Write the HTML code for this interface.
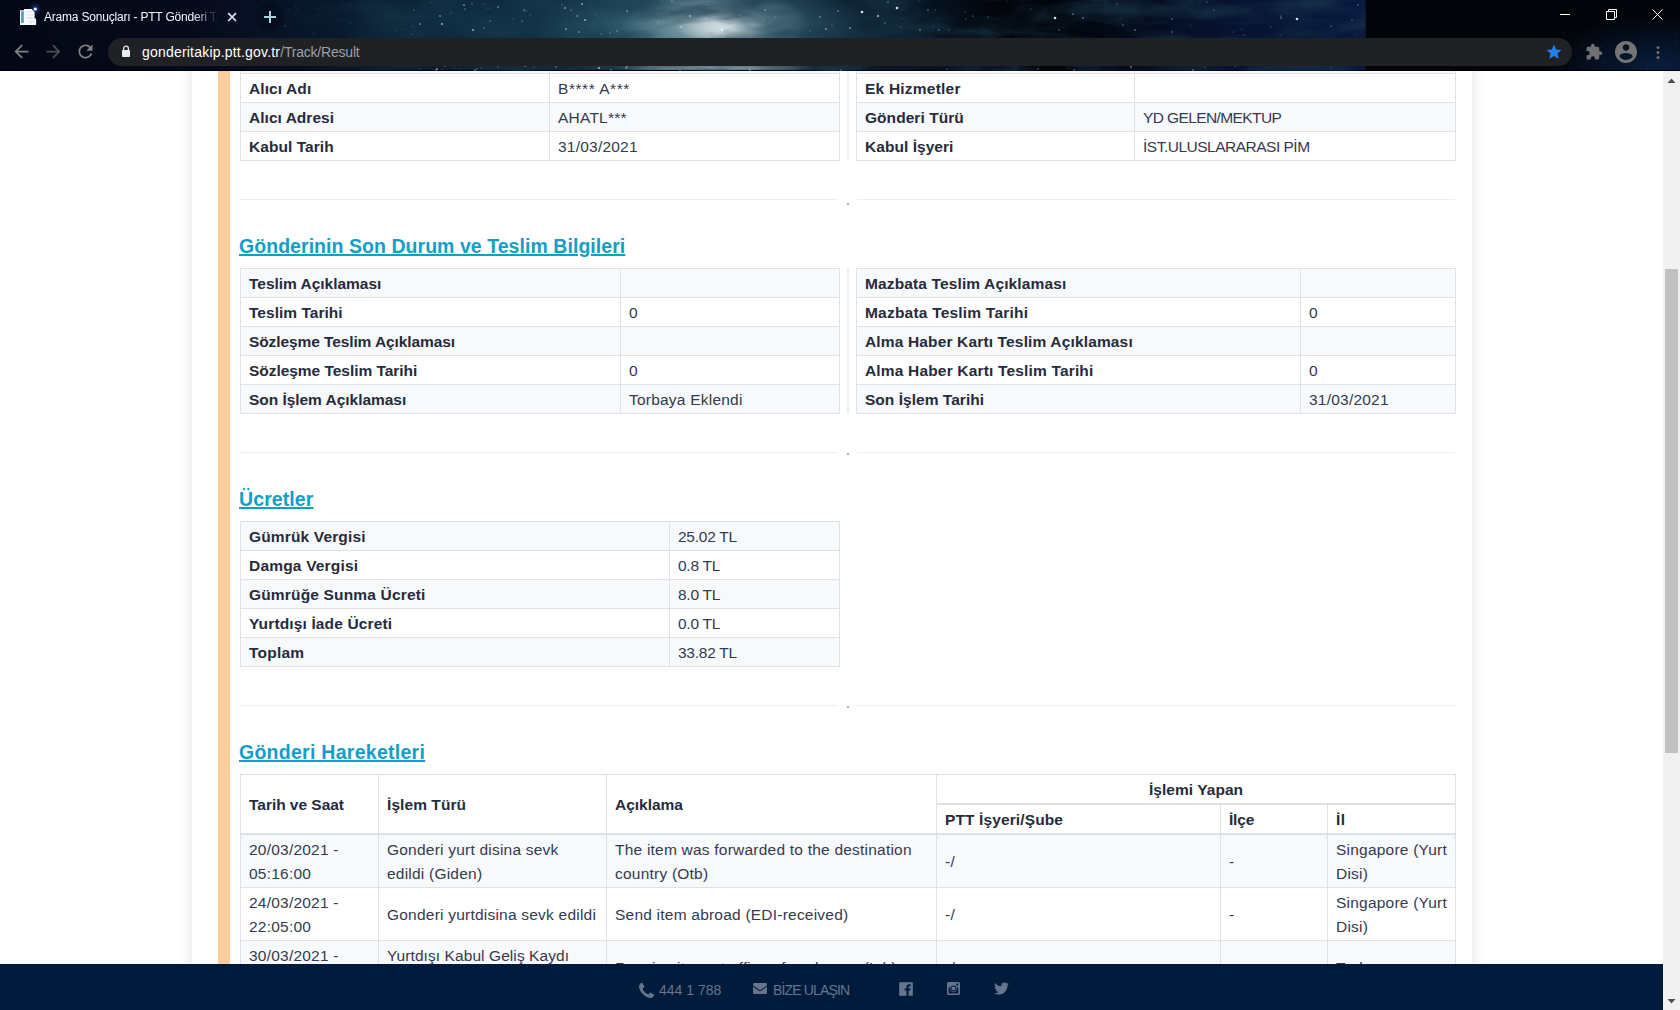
<!DOCTYPE html>
<html lang="tr">
<head>
<meta charset="utf-8">
<title>Arama Sonuçları - PTT Gönderi Takip</title>
<style>
*{box-sizing:border-box}
html,body{margin:0;padding:0}
body{width:1680px;height:1010px;overflow:hidden;position:relative;background:#fff;font-family:"Liberation Sans",sans-serif;font-size:15.5px;line-height:24px;color:#343a4f}
.abs{position:absolute}
/* ---------- browser chrome ---------- */
#chrome{position:absolute;left:0;top:0;width:1680px;height:71px;overflow:hidden;background:#03060f}
#chrome .bg{position:absolute;left:0;top:0;width:1680px;height:71px;background:
 radial-gradient(ellipse 100px 5px at 715px 68px,rgba(190,212,218,.85),rgba(150,180,190,0) 100%),
 radial-gradient(ellipse 45px 16px at 722px 28px,rgba(215,226,230,.9),rgba(200,215,220,0) 100%),
 radial-gradient(ellipse 95px 36px at 716px 25px,rgba(176,194,200,.98),rgba(140,166,176,.6) 45%,rgba(150,172,180,0) 100%),
 radial-gradient(ellipse 170px 60px at 705px 30px,rgba(70,118,134,.95),rgba(70,118,134,0) 100%),
 radial-gradient(ellipse 330px 100px at 670px 30px,rgba(24,70,92,.95),rgba(24,70,92,0) 100%),
 radial-gradient(ellipse 260px 80px at 440px 20px,rgba(12,40,62,.9),rgba(12,40,62,0) 100%),
 linear-gradient(90deg,rgba(8,24,64,0) 1060px,rgba(7,21,56,.85) 1230px,rgba(9,25,64,1) 1365px,rgba(0,0,0,0) 1366px),
 radial-gradient(ellipse 120px 50px at 1660px 66px,rgba(12,40,84,.7),rgba(12,40,84,0) 100%),
 linear-gradient(90deg,#040816 0,#050a1c 300px,#040a18 900px,#02050c 1000px,#020409 1366px,#020409 1680px)}
#chrome .bg2{position:absolute;left:0;top:70px;width:1680px;height:1px;background:#000}
#omni{position:absolute;left:108px;top:38px;width:1464px;height:28px;border-radius:14px;background:#202124}
#tabtitle{position:absolute;left:44px;top:7px;font-size:12px;line-height:20px;color:#eef9ff;white-space:nowrap;width:176px;overflow:hidden;letter-spacing:-0.2px;-webkit-mask-image:linear-gradient(90deg,#000 150px,transparent 174px);mask-image:linear-gradient(90deg,#000 150px,transparent 174px)}
#url{position:absolute;left:142px;top:42px;font-size:14px;line-height:20px;color:#fff;white-space:nowrap;letter-spacing:0.2px}
#url span{color:#9aa0a6;letter-spacing:-0.2px}
/* ---------- page ---------- */
#page{position:absolute;left:0;top:71px;width:1663px;height:893px;overflow:hidden;background:#fff}
#cont{position:absolute;left:192px;top:-40px;width:1280px;height:1100px;background:#fff;box-shadow:0 0 14px rgba(0,0,0,.13)}
#bar{position:absolute;left:218px;top:0;width:12px;height:900px;background:#f8cc9d}
table{border-collapse:collapse;table-layout:fixed;position:absolute;margin:0}
td,th{border:1px solid #dee2e6;padding:3px 8px 1px 8px;height:29px;text-align:left;vertical-align:middle;font-weight:400;overflow:hidden;letter-spacing:0.22px}
th{font-weight:700;color:#262b3d;letter-spacing:0.05px}
#t4 thead th{border-bottom-width:2px}
tr.s td,tr.s th{background:#f8f9fa}
h3{position:absolute;margin:0;font-size:19.5px;line-height:28px;font-weight:700;color:#129ec8;white-space:nowrap;letter-spacing:0.05px;text-decoration:underline;text-decoration-thickness:2px;text-underline-offset:1px}
.hr{position:absolute;height:1px;background:#eceef0}
.vd{position:absolute;width:2px;left:847px;background:#eceef0}
.dot{position:absolute;left:847px;width:2px;height:2px;background:#a4aacb}
/* ---------- footer ---------- */
#footer{position:absolute;left:0;top:964px;width:1663px;height:46px;background:#001b3b;color:#66758d;font-size:14px;line-height:20px}
#footer span{position:absolute;top:16px;white-space:nowrap}
/* ---------- scrollbar ---------- */
#sb{position:absolute;left:1663px;top:71px;width:17px;height:939px;background:#f1f1f1}
#sb .thumb{position:absolute;left:2px;top:198px;width:13px;height:484px;background:#c1c1c1}
#sb svg{position:absolute;left:4px}
</style>
</head>
<body>

<!-- PAGE -->
<div id="page">
  <div id="cont"></div>
  <div id="bar"></div>

  <!-- section 1 (cut by viewport) -->
  <table style="left:240px;top:-27px;width:600px">
    <colgroup><col style="width:309px"><col></colgroup>
    <tr class="s"><th>Gönderen Adı</th><td>S*** P***</td></tr>
    <tr><th style="letter-spacing:0.1px">Alıcı Adı</th><td style="letter-spacing:0.55px">B**** A***</td></tr>
    <tr class="s"><th style="letter-spacing:0.03px">Alıcı Adresi</th><td>AHATL***</td></tr>
    <tr><th style="letter-spacing:0.05px">Kabul Tarih</th><td>31/03/2021</td></tr>
  </table>
  <table style="left:856px;top:-27px;width:600px">
    <colgroup><col style="width:278px"><col></colgroup>
    <tr class="s"><th>Ağırlık</th><td></td></tr>
    <tr><th style="letter-spacing:0.22px">Ek Hizmetler</th><td></td></tr>
    <tr class="s"><th style="letter-spacing:0.05px">Gönderi Türü</th><td style="letter-spacing:-0.6px">YD GELEN/MEKTUP</td></tr>
    <tr><th style="letter-spacing:0.05px">Kabul İşyeri</th><td style="letter-spacing:-0.5px">İST.ULUSLARARASI PİM</td></tr>
  </table>
  <div class="vd" style="top:0;height:90px"></div>
  <div class="hr" style="left:240px;top:128px;width:598px"></div>
  <div class="hr" style="left:857px;top:128px;width:598px"></div>
  <div class="dot" style="top:132px"></div>

  <!-- section 2 -->
  <h3 style="left:239px;top:161px">Gönderinin Son Durum ve Teslim Bilgileri</h3>
  <table style="left:240px;top:197px;width:600px">
    <colgroup><col style="width:380px"><col></colgroup>
    <tr class="s"><th style="letter-spacing:-0.02px">Teslim Açıklaması</th><td></td></tr>
    <tr><th style="letter-spacing:0.03px">Teslim Tarihi</th><td>0</td></tr>
    <tr class="s"><th style="letter-spacing:-0.1px">Sözleşme Teslim Açıklaması</th><td></td></tr>
    <tr><th style="letter-spacing:-0.04px">Sözleşme Teslim Tarihi</th><td>0</td></tr>
    <tr class="s"><th style="letter-spacing:-0.04px">Son İşlem Açıklaması</th><td>Torbaya Eklendi</td></tr>
  </table>
  <table style="left:856px;top:197px;width:600px">
    <colgroup><col style="width:444px"><col></colgroup>
    <tr class="s"><th style="letter-spacing:0.13px">Mazbata Teslim Açıklaması</th><td></td></tr>
    <tr><th style="letter-spacing:0.21px">Mazbata Teslim Tarihi</th><td>0</td></tr>
    <tr class="s"><th style="letter-spacing:0.15px">Alma Haber Kartı Teslim Açıklaması</th><td></td></tr>
    <tr><th style="letter-spacing:0.17px">Alma Haber Kartı Teslim Tarihi</th><td>0</td></tr>
    <tr class="s"><th style="letter-spacing:0.03px">Son İşlem Tarihi</th><td>31/03/2021</td></tr>
  </table>
  <div class="vd" style="top:197px;height:146px"></div>
  <div class="hr" style="left:240px;top:381px;width:598px"></div>
  <div class="hr" style="left:857px;top:381px;width:598px"></div>
  <div class="dot" style="top:382px"></div>

  <!-- section 3 -->
  <h3 style="left:239px;top:414px;letter-spacing:0.1px">Ücretler</h3>
  <table style="left:240px;top:450px;width:600px">
    <colgroup><col style="width:429px"><col></colgroup>
    <tr class="s"><th style="letter-spacing:0.15px">Gümrük Vergisi</th><td style="letter-spacing:-0.25px">25.02 TL</td></tr>
    <tr><th style="letter-spacing:0.19px">Damga Vergisi</th><td style="letter-spacing:-0.25px">0.8 TL</td></tr>
    <tr class="s"><th style="letter-spacing:0.17px">Gümrüğe Sunma Ücreti</th><td style="letter-spacing:-0.25px">8.0 TL</td></tr>
    <tr><th style="letter-spacing:0.14px">Yurtdışı İade Ücreti</th><td style="letter-spacing:-0.25px">0.0 TL</td></tr>
    <tr class="s"><th style="letter-spacing:0.22px">Toplam</th><td style="letter-spacing:-0.25px">33.82 TL</td></tr>
  </table>
  <div class="hr" style="left:240px;top:634px;width:598px"></div>
  <div class="hr" style="left:857px;top:634px;width:598px"></div>
  <div class="dot" style="top:635px"></div>

  <!-- section 4 -->
  <h3 style="left:239px;top:667px;letter-spacing:0.27px">Gönderi Hareketleri</h3>
  <table id="t4" style="left:240px;top:703px;width:1216px">
    <colgroup><col style="width:138px"><col style="width:228px"><col style="width:330px"><col style="width:284px"><col style="width:107px"><col></colgroup>
    <thead>
    <tr><th rowspan="2" style="letter-spacing:-0.03px">Tarih ve Saat</th><th rowspan="2" style="letter-spacing:0.07px">İşlem Türü</th><th rowspan="2" style="letter-spacing:-0.02px">Açıklama</th><th colspan="3" style="text-align:center;border-bottom-width:2px">İşlemi Yapan</th></tr>
    <tr class="h2"><th style="letter-spacing:0.12px">PTT İşyeri/Şube</th><th style="letter-spacing:-0.2px">İlçe</th><th style="letter-spacing:0.55px">İl</th></tr>
    </thead>
    <tbody>
    <tr class="s"><td>20/03/2021 - 05:16:00</td><td>Gonderi yurt disina sevk edildi (Giden)</td><td>The item was forwarded to the destination country (Otb)</td><td>-/</td><td>-</td><td>Singapore (Yurt Disi)</td></tr>
    <tr><td>24/03/2021 - 22:05:00</td><td>Gonderi yurtdisina sevk edildi</td><td>Send item abroad (EDI-received)</td><td>-/</td><td>-</td><td>Singapore (Yurt Disi)</td></tr>
    <tr class="s"><td>30/03/2021 - 09:12:00</td><td style="letter-spacing:0.08px">Yurtdışı Kabul Geliş Kaydı Yapıldı</td><td>Receive item at office of exchange (Inb)</td><td>-/</td><td>-</td><td>Turkey</td></tr>
    </tbody>
  </table>
</div>

<!-- FOOTER -->
<div id="footer">
  <svg class="abs" style="left:639px;top:19px" width="15" height="15" viewBox="0 0 1408 1408"><path fill="#66758d" d="M1408 1112q0 27-10 70.500t-21 68.500q-21 50-122 106-94 51-186 51-27 0-53-3.500t-57.500-12.500-47-14.500-55.500-20.500-49-18q-98-35-175-83-127-79-264-216t-216-264q-48-77-83-175-3-9-18-49t-20.500-55.500-14.500-47-12.500-57.500-3.500-53q0-92 51-186 56-101 106-122 25-11 68.500-21t70.500-10q14 0 21 3 18 6 53 76 11 19 30 54t35 63.500 31 53.500q3 4 17.500 25t21.500 35.500 7 28.500q0 20-28.500 50t-62 55-62 53-28.500 46q0 9 5 22.500t8.500 20.500 14 24 11.500 19q76 137 174 235t235 174q2 1 19 11.500t24 14 20.500 8.500 22.500 5q18 0 46-28.500t53-62 55-62 50-28.500q14 0 28.500 7t35.500 21.500 25 17.500q25 15 53.500 31t63.500 35 54 30q70 35 76 53 3 7 3 21z"/></svg>
  <span style="left:659px">444 1 788</span>
  <svg class="abs" style="left:753px;top:17px" width="14" height="14" viewBox="0 0 1792 1792"><path fill="#66758d" d="M1792 710v794q0 66-47 113t-113 47h-1472q-66 0-113-47t-47-113v-794q44 49 101 87 362 246 497 345 57 42 92.500 65.500t94.500 48 110 24.500h2q51 0 110-24.500t94.500-48 92.500-65.500q170-123 498-345 57-39 100-87zm0-294q0 79-49 151t-122 123q-376 261-468 325-10 7-42.500 30.500t-54 38-52 32.500-57.500 27-50 9h-2q-23 0-50-9t-57.500-27-52-32.500-54-38-42.500-30.500q-91-64-262-182.500t-205-142.500q-62-42-117-115.500t-55-136.500q0-78 41.500-130t118.500-52h1472q65 0 112.500 47t47.500 113z"/></svg>
  <span style="left:773px;letter-spacing:-0.85px">BİZE ULAŞIN</span>
  <svg class="abs" style="left:897.500px;top:16.500px" width="16" height="16" viewBox="0 0 1792 1792"><path fill="#66758d" d="M1579 128q35 0 60 25t25 60v1366q0 35-25 60t-60 25h-391v-595h199l30-232h-229v-148q0-56 23.500-84t91.500-28l122-1v-207q-63-9-178-9-136 0-217.500 80t-81.500 226v171h-200v232h200v595h-735q-35 0-60-25t-25-60v-1366q0-35 25-60t60-25h1366z"/></svg>
  <svg class="abs" style="left:946.500px;top:18px" width="13" height="13" viewBox="0 0 13 13"><path fill="#66758d" fill-rule="evenodd" d="M1.500 0h10A1.500 1.500 0 0 1 13 1.500v10a1.500 1.500 0 0 1-1.500 1.500h-10A1.500 1.500 0 0 1 0 11.500v-10A1.500 1.500 0 0 1 1.500 0zM9.300 1.600v1.900h1.900V1.600zM6.500 3.400a3.100 3.100 0 1 0 0 6.200 3.100 3.100 0 0 0 0-6.200zM1.600 5.400v5.500c0 .3.200.5.500.5h8.800c.3 0 .5-.2.500-.5V5.400H9.900a3.600 3.600 0 1 1-6.800 0z"/><circle cx="6.500" cy="6.500" r="2" fill="#66758d"/></svg>
  <svg class="abs" style="left:992.500px;top:16px" width="17" height="17" viewBox="0 0 1792 1792"><path fill="#66758d" d="M1684 408q-67 98-162 167 1 14 1 42 0 130-38 259.500t-115.500 248.500-184.500 210.500-258 146-323 54.500q-271 0-496-145 35 4 78 4 225 0 401-138-105-2-188-64.500t-114-159.500q33 5 61 5 43 0 85-11-112-23-185.500-111.500t-73.500-205.500v-4q68 38 146 41-66-44-105-115t-39-154q0-88 44-163 121 149 294.500 238.500t371.500 99.500q-8-38-8-74 0-134 94.500-228.500t228.500-94.500q140 0 236 102 109-21 205-78-37 115-142 178 93-10 186-50z"/></svg>
</div>

<!-- SCROLLBAR -->
<div id="sb"><div class="thumb"></div><svg style="top:6.5px" width="9" height="5" viewBox="0 0 9 5"><path d="M0.500 5L4.500 0.600 8.500 5z" fill="#505050"/></svg><svg style="top:927.500px" width="9" height="5" viewBox="0 0 9 5"><path d="M0.500 0L4.500 4.400 8.500 0z" fill="#505050"/></svg></div>

<!-- CHROME -->
<div id="chrome">
  <div class="bg"></div>
  <div class="bg2"></div>
  <svg class="abs" style="left:0;top:0" width="1680" height="71" viewBox="0 0 1680 71"><defs><filter id="nz" x="0" y="0" width="100%" height="100%"><feTurbulence type="fractalNoise" baseFrequency="0.014 0.05" numOctaves="4" seed="5"/><feColorMatrix values="0 0 0 0 0.01  0 0 0 0 0.04  0 0 0 0 0.07  1.5 0 0 0 -0.56"/></filter><linearGradient id="mg" x1="0" x2="1680" gradientUnits="userSpaceOnUse"><stop offset="0.16" stop-color="#000"/><stop offset="0.26" stop-color="#fff"/><stop offset="1" stop-color="#fff"/></linearGradient><mask id="mk" maskUnits="userSpaceOnUse" x="0" y="0" width="1680" height="71"><rect width="1680" height="71" fill="url(#mg)"/></mask></defs><g mask="url(#mk)"><rect x="260" y="0" width="1106" height="71" filter="url(#nz)"/></g><circle cx="562" cy="5" r="0.7" fill="#cfe8ee" opacity="0.39"/><circle cx="668" cy="13" r="0.4" fill="#cfe8ee" opacity="0.65"/><circle cx="419" cy="16" r="0.4" fill="#cfe8ee" opacity="0.40"/><circle cx="612" cy="30" r="0.4" fill="#cfe8ee" opacity="0.48"/><circle cx="714" cy="34" r="0.7" fill="#cfe8ee" opacity="0.59"/><circle cx="888" cy="2" r="0.8" fill="#cfe8ee" opacity="0.52"/><circle cx="472" cy="4" r="0.5" fill="#cfe8ee" opacity="0.84"/><circle cx="490" cy="21" r="0.7" fill="#cfe8ee" opacity="0.57"/><circle cx="674" cy="2" r="0.4" fill="#cfe8ee" opacity="0.47"/><circle cx="740" cy="15" r="0.5" fill="#cfe8ee" opacity="0.70"/><circle cx="627" cy="11" r="0.8" fill="#cfe8ee" opacity="0.77"/><circle cx="522" cy="21" r="0.6" fill="#cfe8ee" opacity="0.88"/><circle cx="765" cy="10" r="0.9" fill="#cfe8ee" opacity="0.42"/><circle cx="609" cy="27" r="0.4" fill="#cfe8ee" opacity="0.64"/><circle cx="420" cy="24" r="0.8" fill="#cfe8ee" opacity="0.69"/><circle cx="838" cy="11" r="0.7" fill="#cfe8ee" opacity="0.71"/><circle cx="690" cy="16" r="0.8" fill="#cfe8ee" opacity="0.92"/><circle cx="637" cy="24" r="0.4" fill="#cfe8ee" opacity="0.77"/><circle cx="724" cy="36" r="0.8" fill="#cfe8ee" opacity="0.52"/><circle cx="593" cy="24" r="0.4" fill="#cfe8ee" opacity="0.63"/><circle cx="484" cy="4" r="0.4" fill="#cfe8ee" opacity="0.81"/><circle cx="465" cy="9" r="0.6" fill="#cfe8ee" opacity="0.87"/><circle cx="440" cy="16" r="0.7" fill="#cfe8ee" opacity="0.88"/><circle cx="810" cy="31" r="0.5" fill="#cfe8ee" opacity="0.60"/><circle cx="579" cy="32" r="0.9" fill="#cfe8ee" opacity="0.44"/><circle cx="488" cy="8" r="0.5" fill="#cfe8ee" opacity="0.64"/><circle cx="695" cy="9" r="0.4" fill="#cfe8ee" opacity="0.60"/><circle cx="585" cy="20" r="0.9" fill="#cfe8ee" opacity="0.76"/><circle cx="658" cy="22" r="0.7" fill="#cfe8ee" opacity="0.38"/><circle cx="850" cy="28" r="0.8" fill="#cfe8ee" opacity="0.83"/><circle cx="596" cy="14" r="0.4" fill="#cfe8ee" opacity="0.73"/><circle cx="431" cy="2" r="0.5" fill="#cfe8ee" opacity="0.45"/><circle cx="570" cy="2" r="0.4" fill="#cfe8ee" opacity="0.44"/><circle cx="451" cy="13" r="0.4" fill="#cfe8ee" opacity="0.87"/><circle cx="707" cy="5" r="0.5" fill="#cfe8ee" opacity="0.56"/><circle cx="582" cy="4" r="0.8" fill="#cfe8ee" opacity="0.95"/><circle cx="633" cy="17" r="0.4" fill="#cfe8ee" opacity="0.41"/><circle cx="571" cy="10" r="0.8" fill="#cfe8ee" opacity="0.45"/><circle cx="412" cy="34" r="0.6" fill="#cfe8ee" opacity="0.44"/><circle cx="672" cy="1" r="0.6" fill="#cfe8ee" opacity="0.94"/><circle cx="832" cy="25" r="0.5" fill="#cfe8ee" opacity="0.57"/><circle cx="484" cy="28" r="0.6" fill="#cfe8ee" opacity="0.82"/><circle cx="565" cy="8" r="0.8" fill="#cfe8ee" opacity="0.94"/><circle cx="826" cy="29" r="0.8" fill="#cfe8ee" opacity="0.79"/><circle cx="513" cy="19" r="0.5" fill="#cfe8ee" opacity="0.37"/><circle cx="414" cy="10" r="0.5" fill="#cfe8ee" opacity="0.77"/><circle cx="878" cy="16" r="0.9" fill="#cfe8ee" opacity="0.94"/><circle cx="878" cy="13" r="0.5" fill="#cfe8ee" opacity="0.49"/><circle cx="498" cy="7" r="0.7" fill="#cfe8ee" opacity="0.89"/><circle cx="820" cy="17" r="0.7" fill="#cfe8ee" opacity="0.83"/><circle cx="442" cy="24" r="0.9" fill="#cfe8ee" opacity="0.82"/><circle cx="775" cy="17" r="0.4" fill="#cfe8ee" opacity="0.82"/><circle cx="566" cy="29" r="0.9" fill="#cfe8ee" opacity="0.59"/><circle cx="601" cy="34" r="0.7" fill="#cfe8ee" opacity="0.45"/><circle cx="464" cy="5" r="0.8" fill="#cfe8ee" opacity="0.83"/><circle cx="473" cy="30" r="0.9" fill="#cfe8ee" opacity="0.74"/><circle cx="575" cy="20" r="0.4" fill="#cfe8ee" opacity="0.36"/><circle cx="885" cy="23" r="0.6" fill="#cfe8ee" opacity="0.91"/><circle cx="617" cy="31" r="0.8" fill="#cfe8ee" opacity="0.48"/><circle cx="526" cy="11" r="0.5" fill="#cfe8ee" opacity="0.70"/><circle cx="530" cy="15" r="0.4" fill="#cfe8ee" opacity="0.90"/><circle cx="577" cy="16" r="0.7" fill="#cfe8ee" opacity="0.89"/><circle cx="610" cy="33" r="0.6" fill="#cfe8ee" opacity="0.67"/><circle cx="662" cy="1" r="0.6" fill="#cfe8ee" opacity="0.46"/><circle cx="402" cy="29" r="0.4" fill="#cfe8ee" opacity="0.63"/><circle cx="763" cy="20" r="0.5" fill="#cfe8ee" opacity="0.66"/><circle cx="678" cy="28" r="0.4" fill="#cfe8ee" opacity="0.69"/><circle cx="524" cy="10" r="0.8" fill="#cfe8ee" opacity="0.65"/><circle cx="681" cy="27" r="0.9" fill="#cfe8ee" opacity="0.62"/><circle cx="706" cy="18" r="0.6" fill="#cfe8ee" opacity="0.77"/><circle cx="626" cy="68" r="0.6" fill="#cfe8ee" opacity="0.91"/><circle cx="750" cy="70" r="0.9" fill="#cfe8ee" opacity="0.51"/><circle cx="680" cy="70" r="0.8" fill="#cfe8ee" opacity="0.43"/><circle cx="461" cy="68" r="0.4" fill="#cfe8ee" opacity="0.49"/><circle cx="437" cy="69" r="0.8" fill="#cfe8ee" opacity="0.89"/><circle cx="477" cy="69" r="0.7" fill="#cfe8ee" opacity="0.44"/><circle cx="841" cy="70" r="0.5" fill="#cfe8ee" opacity="0.92"/><circle cx="599" cy="68" r="0.9" fill="#cfe8ee" opacity="0.85"/><circle cx="481" cy="68" r="0.6" fill="#cfe8ee" opacity="0.55"/><circle cx="498" cy="67" r="0.7" fill="#cfe8ee" opacity="0.36"/><circle cx="677" cy="68" r="0.4" fill="#cfe8ee" opacity="0.55"/><circle cx="712" cy="68" r="0.4" fill="#cfe8ee" opacity="0.94"/><circle cx="794" cy="70" r="0.4" fill="#cfe8ee" opacity="0.51"/><circle cx="420" cy="69" r="0.5" fill="#cfe8ee" opacity="0.43"/><circle cx="611" cy="70" r="0.8" fill="#cfe8ee" opacity="0.51"/><circle cx="475" cy="70" r="0.7" fill="#cfe8ee" opacity="0.77"/><circle cx="445" cy="66" r="0.7" fill="#cfe8ee" opacity="0.61"/><circle cx="436" cy="70" r="0.7" fill="#cfe8ee" opacity="0.83"/><circle cx="442" cy="69" r="0.4" fill="#cfe8ee" opacity="0.87"/><circle cx="627" cy="67" r="0.7" fill="#cfe8ee" opacity="0.91"/><circle cx="534" cy="67" r="0.6" fill="#cfe8ee" opacity="0.49"/><circle cx="455" cy="67" r="0.4" fill="#cfe8ee" opacity="0.47"/><circle cx="556" cy="67" r="0.8" fill="#cfe8ee" opacity="0.52"/><circle cx="650" cy="67" r="0.5" fill="#cfe8ee" opacity="0.36"/><circle cx="525" cy="66" r="0.8" fill="#cfe8ee" opacity="0.68"/><circle cx="988" cy="17" r="0.8" fill="#a9c4f5" opacity="0.41"/><circle cx="1281" cy="16" r="0.6" fill="#a9c4f5" opacity="0.85"/><circle cx="1083" cy="18" r="0.7" fill="#a9c4f5" opacity="0.94"/><circle cx="1059" cy="30" r="0.7" fill="#a9c4f5" opacity="0.73"/><circle cx="1088" cy="13" r="0.4" fill="#a9c4f5" opacity="0.43"/><circle cx="933" cy="27" r="0.5" fill="#a9c4f5" opacity="0.45"/><circle cx="939" cy="30" r="0.7" fill="#a9c4f5" opacity="0.75"/><circle cx="1031" cy="9" r="0.5" fill="#a9c4f5" opacity="0.63"/><circle cx="973" cy="16" r="0.5" fill="#a9c4f5" opacity="0.93"/><circle cx="1352" cy="20" r="0.5" fill="#a9c4f5" opacity="0.93"/><circle cx="1044" cy="13" r="0.4" fill="#a9c4f5" opacity="0.58"/><circle cx="1121" cy="18" r="0.4" fill="#a9c4f5" opacity="0.65"/><circle cx="902" cy="10" r="0.4" fill="#a9c4f5" opacity="0.59"/><circle cx="919" cy="1" r="0.5" fill="#a9c4f5" opacity="0.49"/><circle cx="1172" cy="19" r="0.7" fill="#a9c4f5" opacity="0.74"/><circle cx="1233" cy="32" r="0.5" fill="#a9c4f5" opacity="0.55"/><circle cx="1358" cy="5" r="0.7" fill="#a9c4f5" opacity="0.74"/><circle cx="920" cy="30" r="0.8" fill="#a9c4f5" opacity="0.73"/><circle cx="1241" cy="29" r="0.4" fill="#a9c4f5" opacity="0.66"/><circle cx="1135" cy="30" r="0.7" fill="#a9c4f5" opacity="0.85"/><circle cx="1172" cy="32" r="0.7" fill="#a9c4f5" opacity="0.77"/><circle cx="1007" cy="1" r="0.4" fill="#a9c4f5" opacity="0.57"/><circle cx="949" cy="30" r="0.6" fill="#a9c4f5" opacity="0.73"/><circle cx="1191" cy="25" r="0.6" fill="#a9c4f5" opacity="0.35"/><circle cx="1271" cy="27" r="0.6" fill="#a9c4f5" opacity="0.67"/><circle cx="1207" cy="2" r="0.7" fill="#a9c4f5" opacity="0.50"/><circle cx="935" cy="10" r="0.7" fill="#a9c4f5" opacity="0.47"/><circle cx="1244" cy="35" r="0.6" fill="#a9c4f5" opacity="0.58"/><circle cx="1123" cy="25" r="0.7" fill="#a9c4f5" opacity="0.72"/><circle cx="1199" cy="3" r="0.4" fill="#a9c4f5" opacity="0.50"/><circle cx="1246" cy="11" r="0.6" fill="#a9c4f5" opacity="0.36"/><circle cx="928" cy="10" r="0.7" fill="#a9c4f5" opacity="0.77"/><circle cx="1214" cy="10" r="0.6" fill="#a9c4f5" opacity="0.63"/><circle cx="1117" cy="4" r="0.8" fill="#a9c4f5" opacity="0.47"/><circle cx="1355" cy="34" r="0.4" fill="#a9c4f5" opacity="0.63"/><circle cx="1281" cy="35" r="0.6" fill="#a9c4f5" opacity="0.51"/><circle cx="998" cy="34" r="0.4" fill="#a9c4f5" opacity="0.70"/><circle cx="966" cy="19" r="0.8" fill="#a9c4f5" opacity="0.43"/><circle cx="1281" cy="18" r="0.7" fill="#a9c4f5" opacity="0.77"/><circle cx="1008" cy="32" r="0.6" fill="#a9c4f5" opacity="0.36"/><circle cx="902" cy="18" r="0.6" fill="#a9c4f5" opacity="0.53"/><circle cx="965" cy="12" r="0.5" fill="#a9c4f5" opacity="0.85"/><circle cx="901" cy="27" r="0.7" fill="#a9c4f5" opacity="0.42"/><circle cx="1331" cy="26" r="0.8" fill="#a9c4f5" opacity="0.52"/><circle cx="1073" cy="14" r="0.8" fill="#a9c4f5" opacity="0.70"/><circle cx="1068" cy="68" r="0.5" fill="#a9c4f5" opacity="0.38"/><circle cx="947" cy="69" r="0.5" fill="#a9c4f5" opacity="0.91"/><circle cx="1016" cy="67" r="0.6" fill="#a9c4f5" opacity="0.46"/><circle cx="1074" cy="70" r="0.7" fill="#a9c4f5" opacity="0.84"/><circle cx="1193" cy="70" r="0.8" fill="#a9c4f5" opacity="0.68"/><circle cx="1235" cy="66" r="0.7" fill="#a9c4f5" opacity="0.62"/><circle cx="1250" cy="69" r="0.5" fill="#a9c4f5" opacity="0.38"/><circle cx="1331" cy="67" r="0.6" fill="#a9c4f5" opacity="0.56"/><circle cx="1038" cy="69" r="0.8" fill="#a9c4f5" opacity="0.51"/><circle cx="1205" cy="67" r="0.6" fill="#a9c4f5" opacity="0.59"/><circle cx="978" cy="67" r="0.4" fill="#a9c4f5" opacity="0.89"/><circle cx="1131" cy="67" r="0.8" fill="#a9c4f5" opacity="0.95"/><circle cx="343" cy="5" r="0.4" fill="#7fa3c8" opacity="0.24"/><circle cx="328" cy="3" r="0.4" fill="#7fa3c8" opacity="0.30"/><circle cx="360" cy="32" r="0.6" fill="#7fa3c8" opacity="0.37"/><circle cx="338" cy="19" r="0.5" fill="#7fa3c8" opacity="0.34"/><circle cx="289" cy="10" r="0.7" fill="#7fa3c8" opacity="0.25"/><circle cx="350" cy="23" r="0.7" fill="#7fa3c8" opacity="0.29"/><circle cx="318" cy="9" r="0.5" fill="#7fa3c8" opacity="0.38"/><circle cx="414" cy="31" r="0.7" fill="#7fa3c8" opacity="0.21"/><circle cx="285" cy="26" r="0.7" fill="#7fa3c8" opacity="0.39"/><circle cx="362" cy="0" r="0.5" fill="#7fa3c8" opacity="0.57"/><circle cx="396" cy="31" r="0.7" fill="#7fa3c8" opacity="0.30"/><circle cx="295" cy="6" r="0.5" fill="#7fa3c8" opacity="0.47"/><circle cx="412" cy="26" r="0.6" fill="#7fa3c8" opacity="0.51"/><circle cx="344" cy="20" r="0.4" fill="#7fa3c8" opacity="0.51"/><circle cx="313" cy="33" r="0.6" fill="#7fa3c8" opacity="0.32"/><circle cx="298" cy="9" r="0.6" fill="#7fa3c8" opacity="0.48"/><circle cx="296" cy="3" r="0.5" fill="#7fa3c8" opacity="0.43"/><circle cx="334" cy="8" r="0.6" fill="#7fa3c8" opacity="0.20"/><circle cx="1596" cy="48" r="0.8" fill="#3f6fb8" opacity="0.46"/><circle cx="1666" cy="49" r="0.5" fill="#3f6fb8" opacity="0.30"/><circle cx="1675" cy="58" r="0.5" fill="#3f6fb8" opacity="0.21"/><circle cx="1620" cy="57" r="0.5" fill="#3f6fb8" opacity="0.30"/><circle cx="1640" cy="67" r="0.5" fill="#3f6fb8" opacity="0.21"/><circle cx="1601" cy="47" r="0.7" fill="#3f6fb8" opacity="0.28"/><circle cx="1656" cy="60" r="0.6" fill="#3f6fb8" opacity="0.28"/><circle cx="1676" cy="42" r="0.7" fill="#3f6fb8" opacity="0.29"/><circle cx="1587" cy="60" r="0.5" fill="#3f6fb8" opacity="0.58"/><circle cx="1619" cy="37" r="0.5" fill="#3f6fb8" opacity="0.37"/><circle cx="1640" cy="68" r="0.4" fill="#3f6fb8" opacity="0.36"/><circle cx="1586" cy="69" r="0.4" fill="#3f6fb8" opacity="0.22"/><circle cx="1567" cy="46" r="0.8" fill="#3f6fb8" opacity="0.55"/><circle cx="1648" cy="70" r="0.8" fill="#3f6fb8" opacity="0.33"/><circle cx="1582" cy="67" r="0.7" fill="#3f6fb8" opacity="0.21"/><circle cx="1640" cy="45" r="0.5" fill="#3f6fb8" opacity="0.33"/><circle cx="1580" cy="30" r="0.5" fill="#3f6fb8" opacity="0.34"/><circle cx="1675" cy="35" r="0.8" fill="#3f6fb8" opacity="0.28"/><circle cx="1603" cy="63" r="0.7" fill="#3f6fb8" opacity="0.37"/><circle cx="1566" cy="49" r="0.5" fill="#3f6fb8" opacity="0.57"/><circle cx="1583" cy="45" r="0.8" fill="#3f6fb8" opacity="0.21"/><circle cx="1609" cy="62" r="0.7" fill="#3f6fb8" opacity="0.22"/><circle cx="1564" cy="33" r="0.8" fill="#3f6fb8" opacity="0.30"/><circle cx="1650" cy="66" r="0.5" fill="#3f6fb8" opacity="0.31"/><circle cx="1675" cy="55" r="0.5" fill="#3f6fb8" opacity="0.49"/><circle cx="862" cy="12" r="1.3" fill="#e8f6ff" opacity=".9"/><circle cx="897" cy="8" r="1.3" fill="#e8f6ff" opacity=".9"/><circle cx="1055" cy="18" r="1.3" fill="#e8f6ff" opacity=".9"/><circle cx="722" cy="30" r="1.3" fill="#e8f6ff" opacity=".9"/><circle cx="1297" cy="19" r="1.3" fill="#e8f6ff" opacity=".9"/></svg>
  <!-- favicon -->
  <svg class="abs" style="left:18px;top:6px;overflow:visible" width="22" height="22" viewBox="0 0 22 22">
    <defs><radialGradient id="glow"><stop offset="0" stop-color="#2a63c8" stop-opacity=".75"/><stop offset="1" stop-color="#0a2a6a" stop-opacity="0"/></radialGradient></defs>
    <circle cx="17.3" cy="3" r="7" fill="url(#glow)"/>
    <path d="M2 4.2h4V3h7.6l3 3v6.6h1.5V19H2z" fill="#fafbfd"/>
    <rect x="3.1" y="5.2" width="2.7" height="11.8" fill="#4f9ad6"/>
    <rect x="7.6" y="5.4" width="7.2" height="1.2" fill="#e3e7ee"/>
    <rect x="7.6" y="8.2" width="7.2" height="1.2" fill="#e3e7ee"/>
    <rect x="8.6" y="11.4" width="6.4" height="1" fill="#c9cfd9"/>
    <rect x="10.6" y="14.4" width="6.2" height="2.6" fill="#e6eaf2"/>
    <circle cx="17.3" cy="3" r="1.6" fill="#fff"/>
  </svg>
  <div id="tabtitle">Arama Sonuçları - PTT Gönderi Ta</div>
  <!-- tab close -->
  <svg class="abs" style="left:226px;top:11px" width="12" height="12" viewBox="0 0 12 12"><path d="M2.2 2.2l7.8 7.8M10 2.2l-7.8 7.8" stroke="#d2e8ee" stroke-width="1.7" fill="none"/></svg>
  <!-- new tab -->
  <div class="abs" style="left:256px;top:3px;width:28px;height:28px;border-radius:14px;background:rgba(0,0,0,.22)"></div>
  <svg class="abs" style="left:263px;top:10px" width="14" height="14" viewBox="0 0 14 14"><path d="M7 1v12M1 7h12" stroke="#a9d2dc" stroke-width="2" fill="none"/></svg>
  <!-- window controls -->
  <svg class="abs" style="left:1556px;top:4px" width="112" height="22" viewBox="0 0 112 22" fill="none" stroke="#fff" stroke-width="1">
    <path d="M4 10.5h10"/>
    <path d="M50.5 7.5h8v8h-8zM52.5 7.5v-2h8v8h-2"/>
    <path d="M96.5 5.5l10 10M106.5 5.5l-10 10"/>
  </svg>
  <!-- nav -->
  <svg class="abs" style="left:11px;top:41.2px" width="21" height="21" viewBox="0 0 24 24"><path fill="#818181" d="M20 11H7.83l5.59-5.59L12 4l-8 8 8 8 1.41-1.41L7.83 13H20v-2z"/></svg>
  <svg class="abs" style="left:43px;top:41.2px" width="21" height="21" viewBox="0 0 24 24"><path fill="#4e4e4e" d="M12 4l-1.41 1.41L16.17 11H4v2h12.17l-5.58 5.59L12 20l8-8z"/></svg>
  <svg class="abs" style="left:75px;top:41.2px" width="21" height="21" viewBox="0 0 24 24"><path fill="#818181" d="M17.65 6.35C16.2 4.9 14.21 4 12 4c-4.42 0-7.99 3.58-7.99 8s3.57 8 7.99 8c3.73 0 6.84-2.55 7.73-6h-2.08c-.82 2.33-3.04 4-5.65 4-3.31 0-6-2.69-6-6s2.69-6 6-6c1.66 0 3.14.69 4.22 1.78L13 11h7V4l-2.35 2.35z"/></svg>
  <div id="omni"></div>
  <!-- lock -->
  <svg class="abs" style="left:121px;top:45px" width="10" height="13" viewBox="0 0 10 13"><path d="M2.6 5.2V3.6a2.4 2.4 0 0 1 4.8 0v1.6" stroke="#e8eaed" stroke-width="1.3" fill="none"/><rect x="1" y="5" width="8" height="7" rx=".8" fill="#e8eaed"/></svg>
  <div id="url">gonderitakip.ptt.gov.tr<span>/Track/Result</span></div>
  <!-- star -->
  <svg class="abs" style="left:1545px;top:43px" width="18" height="18" viewBox="0 0 24 24"><path fill="#1f80ef" d="M12 17.27L18.18 21l-1.64-7.03L22 9.24l-7.19-.61L12 2 9.19 8.63 2 9.24l5.46 4.73L5.82 21z"/></svg>
  <!-- extensions -->
  <svg class="abs" style="left:1585px;top:43px" width="18" height="18" viewBox="0 0 24 24"><path fill="#707070" d="M20.5 11H19V7c0-1.1-.9-2-2-2h-4V3.5C13 2.12 11.880 1 10.5 1S8 2.120 8 3.500V5H4c-1.100 0-1.990.9-1.990 2v3.800H3.500c1.490 0 2.700 1.210 2.700 2.700s-1.210 2.700-2.700 2.700H2V20c0 1.100.9 2 2 2h3.800v-1.500c0-1.490 1.210-2.700 2.700-2.700 1.490 0 2.700 1.210 2.700 2.700V22H17c1.100 0 2-.9 2-2v-4h1.500c1.380 0 2.500-1.120 2.500-2.500S21.880 11 20.500 11z"/></svg>
  <!-- profile -->
  <svg class="abs" style="left:1615px;top:41px" width="22" height="22" viewBox="0 0 24 24"><path fill="#747474" d="M12 0C5.370 0 0 5.370 0 12s5.370 12 12 12 12-5.370 12-12S18.630 0 12 0zm0 3.600c1.990 0 3.600 1.610 3.600 3.600s-1.610 3.600-3.600 3.600-3.600-1.610-3.600-3.600 1.610-3.600 3.600-3.600zm0 17.040c-3 0-5.650-1.540-7.200-3.860.040-2.390 4.800-3.700 7.200-3.700 2.390 0 7.160 1.310 7.200 3.700-1.550 2.320-4.200 3.860-7.200 3.860z"/></svg>
  <!-- menu -->
  <svg class="abs" style="left:1655px;top:44px" width="6" height="16" viewBox="0 0 6 16"><g fill="#6e6e6e"><circle cx="3" cy="3.500" r="1.500"/><circle cx="3" cy="8.500" r="1.500"/><circle cx="3" cy="13.500" r="1.500"/></g></svg>
</div>

</body>
</html>
